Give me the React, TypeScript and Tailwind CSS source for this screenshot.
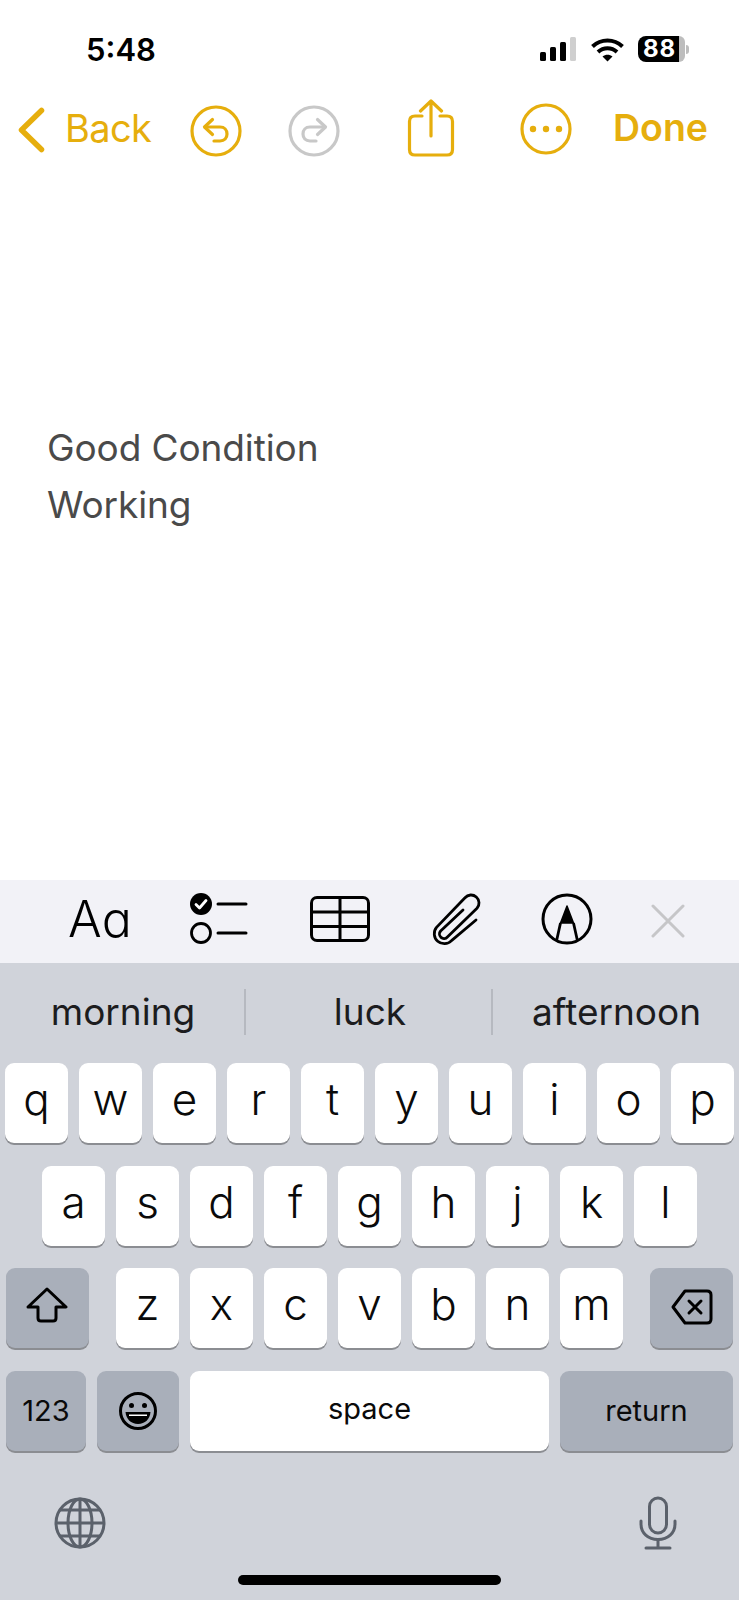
import React from 'react';

const keyBase = "flex items-center justify-center rounded-[9px] h-[80px] shadow-[0_2px_0_#8b8d92] text-[#0a0a0a]";

const Key: React.FC<{ label: string }> = ({ label }) => (
    <div className={`${keyBase} w-[63px] bg-white text-[44px] font-light pb-[8px]`}>{label}</div>
);

const Row: React.FC<{ letters: string }> = ({ letters }) => (
    <div className="flex gap-[11px]">
        {letters.split('').map((l) => <Key key={l} label={l} />)}
    </div>
);

const gold = "#e6ae0d";

const StatusIcons = () => (
    <div className="flex items-center ml-auto mr-[50px] mt-[36px]">
        <svg width="36" height="25" viewBox="0 0 36 25" className="fill-black">
            <rect x="0" y="15" width="6" height="9" rx="1.5" />
            <rect x="10" y="10" width="6" height="14" rx="1.5" />
            <rect x="20" y="5" width="6" height="19" rx="1.5" />
            <rect x="30" y="0" width="6" height="24" rx="1.5" fill="#cfcfcf" />
        </svg>
        <svg width="33" height="25" viewBox="0 0 33 25" className="ml-[15px]" fill="none" stroke="black" strokeWidth="4">
            <path d="M1.5 9.5C10 1.5 23 1.5 31.5 9.5" />
            <path d="M7 15C12.500 10 20.500 10 26 15" />
            <path d="M16.500 24.500L11.500 19.500C14.500 17 18.500 17 21.500 19.500Z" fill="black" stroke="none" />
        </svg>
        <div className="ml-[14px] flex h-[26px] w-[47px]">
            <div className="flex h-full w-[41px] items-center justify-center rounded-l-[8px] bg-black pl-[2px] text-[24px] leading-none font-bold tracking-[1px] text-white font-['Inter']">88</div>
            <div className="h-full w-[6px] rounded-r-[8px] bg-[#bdbdbd]" />
        </div>
        <div className="ml-[1px] h-[9px] w-[3px] rounded-r-full bg-[#bdbdbd]" />
    </div>
);

const CircleArrow: React.FC<{ color: string; flip?: boolean; className?: string }> = ({ color, flip, className }) => (
    <svg width="52" height="52" viewBox="0 0 52 52" fill="none" stroke={color} strokeWidth="3.200" strokeLinecap="round" strokeLinejoin="round" className={className}>
        <circle cx="26" cy="26" r="24" />
        <g transform={flip ? "translate(52 0) scale(-1 1)" : undefined}>
            <path d="M22.500 14.500L14.500 22L22.500 29.500" />
            <path d="M15 22H30C34.500 22 37 25 37 29C37 33 34.500 36 30 36H24" />
        </g>
    </svg>
);

const NavBar = () => (
    <div className="flex items-center h-[66px]">
        <svg width="28" height="46" viewBox="0 0 28 46" fill="none" stroke={gold} strokeWidth="5.500" strokeLinecap="round" strokeLinejoin="round" className="ml-[17px] mb-[2px]">
            <path d="M24.500 3.500L4.500 23L24.500 42.500" />
        </svg>
        <span className="ml-[20px] w-[125px] mb-[6px] text-[38px] leading-none tracking-[-0.6px] text-[#e6ae0d] font-['Inter']">Back</span>
        <CircleArrow color={gold} />
        <CircleArrow color="#c8c8c8" flip className="ml-[46px]" />
        <svg width="48" height="60" viewBox="0 0 48 60" fill="none" stroke={gold} strokeWidth="3.200" strokeLinecap="round" strokeLinejoin="round" className="ml-[67px] mb-[4px]">
            <path d="M15 17H8C4.500 17 2.500 19 2.500 22.500V50.500C2.500 54 4.500 56 8 56H40C43.500 56 45.500 54 45.500 50.500V22.500C45.500 19 43.500 17 40 17H33" />
            <path d="M24 37V2M13.500 12L24 2L34.500 12" />
        </svg>
        <svg width="52" height="52" viewBox="0 0 52 52" className="ml-[65px] mb-[5px]">
            <circle cx="26" cy="26" r="24" fill="none" stroke={gold} strokeWidth="3.200" />
            <circle cx="13" cy="26" r="3.200" fill={gold} />
            <circle cx="26" cy="26" r="3.200" fill={gold} />
            <circle cx="39" cy="26" r="3.200" fill={gold} />
        </svg>
        <span className="ml-[41px] mb-[6px] text-[37.500px] leading-none font-semibold text-[#e6ae0d] font-['Inter']">Done</span>
    </div>
);

const Toolbar = () => (
    <div className="flex items-center h-[83px] pb-[5px] bg-[#f2f2f7] text-black">
        <span className="ml-[68px] w-[62px] text-[50px] leading-none font-light font-['Inter']">Aɑ</span>
        <svg width="60" height="52" viewBox="0 0 60 52" className="ml-[59px]" fill="none" stroke="black">
            <circle cx="12" cy="11" r="11" fill="black" stroke="none" />
            <path d="M7 11.500L10.500 15L17 7.500" stroke="white" strokeWidth="2.800" strokeLinecap="round" strokeLinejoin="round" />
            <circle cx="12" cy="40" r="9.500" strokeWidth="2.800" />
            <path d="M29 11H57M29 40H57" strokeWidth="3" strokeLinecap="round" />
        </svg>
        <svg width="60" height="46" viewBox="0 0 60 46" className="ml-[61px]" fill="none" stroke="black" strokeWidth="3">
            <rect x="1.500" y="1.500" width="57" height="43" rx="5.500" />
            <path d="M1.500 16H58.500M1.500 30.500H58.500M30 1.500V44.500" />
        </svg>
        <svg width="52" height="56" viewBox="430 891 52 56" className="ml-[61px]" fill="none" stroke="black" strokeWidth="2.800" strokeLinecap="round" strokeLinejoin="round">
            <path d="M475 920L450.500 940.600A10 10 0 0 1 435.500 927.400L464 897.700A8 8 0 0 1 476 908.300L446.400 937A4.500 4.500 0 0 1 439.600 931L462 910" />
        </svg>
        <svg width="52" height="52" viewBox="0 0 52 52" className="ml-[58px]" fill="none" stroke="black">
            <circle cx="26" cy="26" r="24" strokeWidth="3" />
            <path d="M26 13L32.500 30H19.500Z" fill="black" stroke="black" strokeWidth="1.500" strokeLinejoin="round" />
            <path d="M19.500 30L15.500 48M32.500 30L36.500 48" strokeWidth="2.800" />
        </svg>
        <svg width="34" height="34" viewBox="0 0 34 34" className="ml-[58px] mt-[4px]" fill="none" stroke="#c6c6c8" strokeWidth="3" strokeLinecap="round">
            <path d="M2 2L32 32M32 2L2 32" />
        </svg>
    </div>
);

const Suggestions = () => (
    <div className="flex items-center h-[100px] pb-[2px] text-[37px] text-[#1c1c1e] font-['Inter']">
        <div className="flex-1 text-center pl-[2px]">morning</div>
        <div className="h-[46px] w-[2px] bg-[#b6b9c0]" />
        <div className="w-[245px] text-center pl-[3px]">luck</div>
        <div className="h-[46px] w-[2px] bg-[#b6b9c0]" />
        <div className="w-[246px] text-center pl-[1px]">afternoon</div>
    </div>
);

const Keyboard = () => (
    <div className="flex flex-1 flex-col bg-[#d0d3da] font-['Inter']">
        <Suggestions />
        <div className="flex flex-col items-center gap-[22.500px]">
            <Row letters="qwertyuiop" />
            <Row letters="asdfghjkl" />
            <div className="flex w-full items-center justify-between px-[6px]">
                <div className={`${keyBase} w-[83px] bg-[#a9afba] pb-[7px] pr-[2px]`}>
                    <svg width="42" height="36" viewBox="0 0 42 36" fill="none" stroke="black" strokeWidth="3" strokeLinejoin="round">
                        <path d="M21 2L40 20H30V31C30 33 29 34 27 34H15C13 34 12 33 12 31V20H2Z" />
                    </svg>
                </div>
                <Row letters="zxcvbnm" />
                <div className={`${keyBase} w-[83px] bg-[#a9afba] pb-[3px]`}>
                    <svg width="42" height="36" viewBox="0 0 42 36" fill="none" stroke="black" strokeWidth="3" strokeLinecap="round" strokeLinejoin="round">
                        <path d="M14 2H36C38.500 2 40 3.500 40 6V30C40 32.500 38.500 34 36 34H14L2 18Z" />
                        <path d="M18 12L30 24M30 12L18 24" />
                    </svg>
                </div>
            </div>
            <div className="flex w-full gap-[11px] px-[6px]">
                <div className={`${keyBase} w-[80px] bg-[#a9afba] text-[29px]`}>123</div>
                <div className={`${keyBase} w-[82px] bg-[#a9afba]`}>
                    <svg width="40" height="40" viewBox="0 0 40 40">
                        <circle cx="20" cy="20" r="17.500" fill="none" stroke="black" strokeWidth="3" />
                        <circle cx="13.500" cy="14.500" r="2.500" />
                        <circle cx="26.500" cy="14.500" r="2.500" />
                        <path d="M7.500 21H32.500C32 28 27 33 20 33C13 33 8 28 7.500 21Z" />
                        <path d="M11 23.500H29V25H11Z" fill="white" />
                    </svg>
                </div>
                <div className={`${keyBase} w-[359px] bg-white text-[29px] pb-[4px]`}>space</div>
                <div className={`${keyBase} flex-1 bg-[#a9afba] text-[29px]`}>return</div>
            </div>
        </div>
        <div className="flex items-center justify-between pl-[54px] pr-[62px] mt-[45px]">
            <svg width="52" height="52" viewBox="0 0 52 52" fill="none" stroke="#5b616b" strokeWidth="3">
                <circle cx="26" cy="26" r="24" />
                <path d="M26 2V50M2 26H50M6 13H46M6 39H46" />
                <ellipse cx="26" cy="26" rx="12" ry="24" />
            </svg>
            <svg width="38" height="54" viewBox="0 0 38 54" fill="none" stroke="#5b616b" strokeWidth="3" strokeLinecap="round">
                <rect x="10.500" y="2" width="17" height="35" rx="8.500" />
                <path d="M2 25V28C2 37 9 43.500 19 43.500C29 43.500 36 37 36 28V25" />
                <path d="M19 43.500V52M7 52H31" />
            </svg>
        </div>
        <div className="mt-[25px] h-[10px] w-[263px] self-center rounded-full bg-black" />
    </div>
);

export default function App() {
    return (
        <div className="flex h-[1600px] w-[739px] flex-col overflow-hidden bg-white font-['Inter']">
            <div className="flex h-[98px] items-start">
                <span className="ml-[86px] mt-[32px] text-[31px] leading-[36px] font-semibold text-black">5:48</span>
                <StatusIcons />
            </div>
            <NavBar />
            <div className="flex-1 pl-[47px] pt-[255px] text-[37px] leading-[57px] tracking-[-0.1px] text-[#4a4a4a]">
                <p>Good Condition</p>
                <p>Working</p>
            </div>
            <Toolbar />
            <div className="flex h-[637px] flex-col">
                <Keyboard />
            </div>
        </div>
    );
}
